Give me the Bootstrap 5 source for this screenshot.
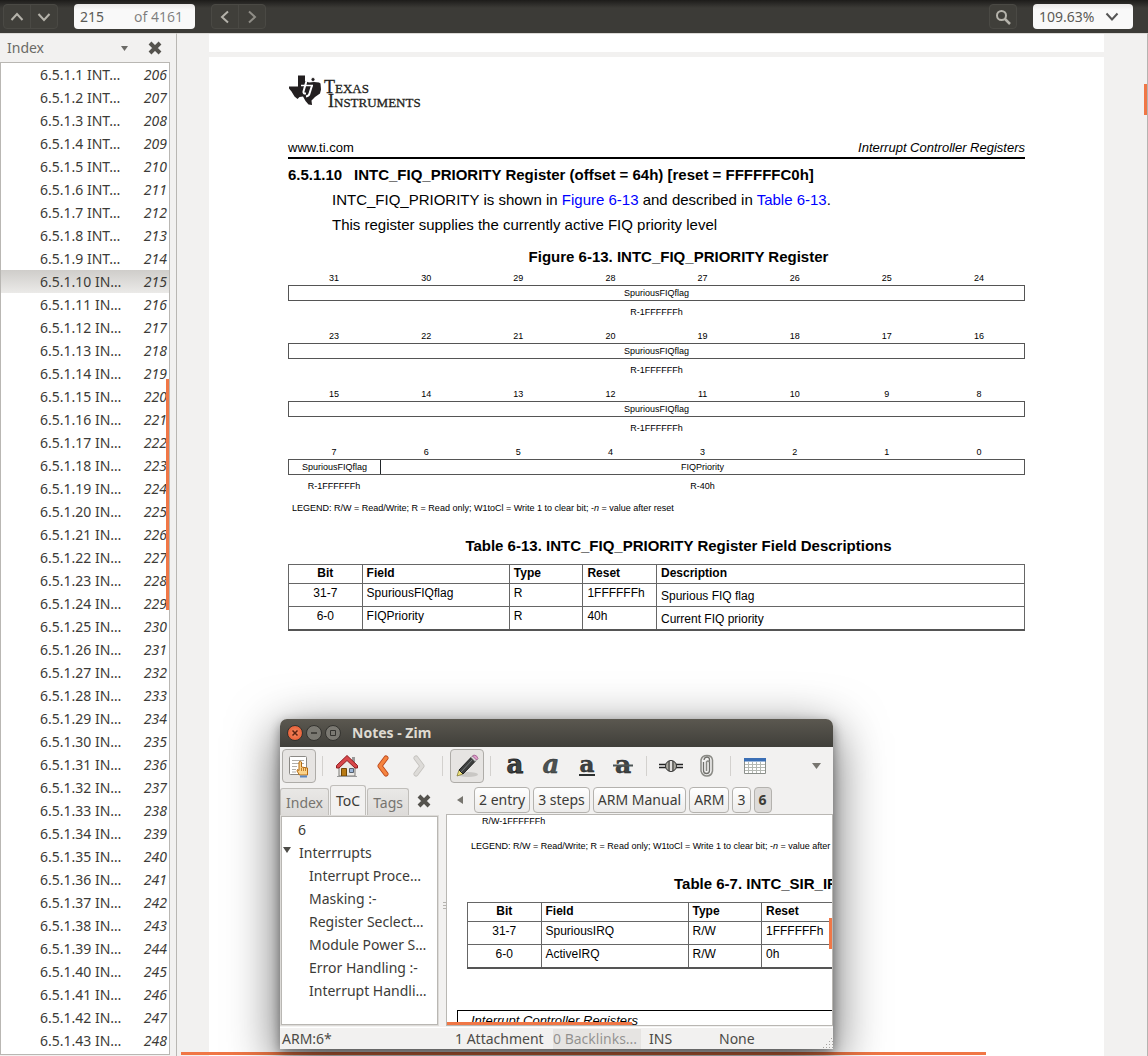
<!DOCTYPE html>
<html lang="en">
<head>
<meta charset="utf-8">
<meta name="viewport" content="width=device-width, initial-scale=1">
<title>INTC_FIQ_PRIORITY Register</title>
<link href="https://cdn.jsdelivr.net/npm/bootstrap@5.3.0/dist/css/bootstrap.min.css" rel="stylesheet">
<style>
:root{--ui:"Noto Sans","Open Sans",sans-serif;--doc:"Liberation Sans",Arial,sans-serif;--panel:#f2f1f0;--line:#b9b7b3;--accent:#f07746}
body{font:14px/20px var(--ui);color:#3c3b37;background:var(--panel)}
svg{display:block;flex:none}
button,input,select{font:inherit;color:inherit}
/* viewer toolbar */
.topbar{height:33px;padding:0 15px 0 3px;background:linear-gradient(#1d1c1a,#3c3b37 8px);color:#b5b3ab}
.darkgrp{border:1px solid #4a4944;border-radius:4px;height:25px;background:#403f3a}
.darkbtn{border:0;background:none;width:26px;padding:0}
.darkbtn+.darkbtn{border-left:1px solid #4a4944;width:27px}
.whitebox{height:25px;border-radius:4px;background:linear-gradient(#e9e8e7,#f9f9f9 6px);color:#5c5b57}
.whitebox input{width:52px;padding:0 0 0 6px;border:0;background:none;outline:0}
.plainsel{appearance:none;border:0;background:none;outline:0;padding:0;cursor:pointer}
.zoomsel{width:100px;padding:0 24px 0 6px}
/* sidebar */
.side{width:177px;border-right:1px solid var(--line);border-top:1px solid #dcdad7}
.sidehead{height:28px;padding:0 14px 0 7px;color:#6b6a66}
.tree{width:170px;border:1px solid var(--line);background:#fff;margin-bottom:1px}
.tree a{height:23px;padding:0 2px 0 39px;color:#3c3b37;text-decoration:none}
.tree a.current{background:linear-gradient(#cfcdca,#ebeae8)}
.thumb{position:absolute;background:var(--accent)}
/* document */
.viewer{border-top:1px solid #dcdad7;border-right:1px solid #b5b3b0}
.sheet{background:#fff;margin:0 43px 0 32px}
.prevpage{height:18px;margin-bottom:5px}
.paper{padding:17px 79px 0 79px;font-family:var(--doc);color:#000}
.brand{height:37px;margin-bottom:27px;color:#231f20}
.brandname{font:18px/14px "Liberation Serif",serif;font-variant:small-caps;padding-top:6px;-webkit-text-stroke:.3px #231f20}
.runhead{font-size:13px;border-bottom:2px solid #000;line-height:19px}
.t15{font-size:15px}
.caption15{line-height:20px;padding-left:44px;text-align:center;font-weight:700}
.paper a{color:#00f;text-decoration:none}
.bitnum{font-size:9px;line-height:12px;text-align:center}
.bitbox{border:1px solid #555;height:16px;line-height:14px;margin:1px 0 5px}
.bitset+.bitset{margin-top:12px}
.w8{width:12.5%}
.legendline{font-size:9px;line-height:12px}
.fields{width:100%;table-layout:fixed;font:12px/16px var(--doc);color:#000;border-bottom:2px solid #555}
.fields th,.fields td{border:1px solid #666;padding:1px 4px;vertical-align:top}
.fields th{height:19px;padding-top:0}.fields td{height:23px}
.fields .low{padding-top:4px}
.fields th:first-child,.fields td:first-child{text-align:center}
/* notes window */
.notes{position:absolute;left:103px;top:685px;width:553px;height:330px;border-radius:7px 7px 0 0;background:var(--panel);box-shadow:0 14px 50px 2px rgba(0,0,0,.58),0 4px 12px rgba(0,0,0,.4)}
.titlebar{height:28px;border-radius:7px 7px 0 0;background:linear-gradient(#5b5850,#403f3a);padding-left:7px;gap:3px;color:#dfdbd2;font-weight:700}
.wbtn{width:16px;height:16px;border-radius:50%;border:1px solid #34332f;background:#7b7972;padding:0}
.wclose{background:radial-gradient(#f58a62,#e4532a)}
.tools{height:37px;padding:1px 12px 1px 2px;gap:2px}
.tbtn{width:34px;height:34px;border:1px solid transparent;border-radius:4px;background:none;padding:0}
.tbtn.pressed{border-color:#aeaca8;background:#e6e4e2}
.vsep{width:1px;height:20px;background:#d3d1ce;margin:0 5px 0 4px}
.leftcol{width:159px}
.tabs{height:31px;gap:1px}
.tabbtn{height:28px;border:1px solid #c0beba;border-bottom:0;border-radius:3px 3px 0 0;background:linear-gradient(#e9e8e6,#dddbd9);color:#76746f;padding:0 5px}
.tabbtn.on{height:31px;background:var(--panel);color:#3c3b37}
.toc{border:1px solid var(--line);outline:1px solid #dddbd8;background:#fff;margin:0 1px 2px 1px;padding:1px 0}
.toc li{height:23px;line-height:23px}
.toc .sub{padding-left:27px}
.crumb{height:26px;border:1px solid #b4b2ae;border-radius:4px;background:linear-gradient(#fff,#ecebea);padding:0 4px}
.crumb.on{background:#dddbd9;font-weight:700}
.note{border:1px solid var(--line);background:#fff;margin-bottom:1px;font-family:var(--doc);color:#000}
.inset{width:736px;margin-left:20px}
.boxhead{border:1px solid #000;width:760px;margin-left:10px;padding-left:13px;font-size:13px;font-style:italic;height:40px}
.status{height:22px;padding-left:2px;color:#4c4b47;border-top:1px solid #fff}
</style>
<script src="https://cdn.jsdelivr.net/npm/bootstrap@5.3.0/dist/js/bootstrap.bundle.min.js"></script>
</head>
<body class="vh-100 d-flex flex-column overflow-hidden">

<header class="topbar d-flex align-items-center flex-shrink-0">
  <div class="darkgrp d-flex">
    <button class="darkbtn d-flex align-items-center justify-content-center" aria-label="Previous page"><svg width="14" height="10" fill="none" stroke="currentColor" stroke-width="2"><path d="M1.500 8 7 2l5.500 6"/></svg></button>
    <button class="darkbtn d-flex align-items-center justify-content-center" aria-label="Next page"><svg width="14" height="10" fill="none" stroke="currentColor" stroke-width="2"><path d="M1.500 2 7 8l5.500-6"/></svg></button>
  </div>
  <div class="whitebox d-flex align-items-center pe-2 ms-3">
    <input id="pg" value="215" aria-label="Page"><label for="pg" class="ps-2 pe-1 text-black-50 text-nowrap">of 4161</label>
  </div>
  <div class="darkgrp d-flex ms-3">
    <button class="darkbtn d-flex align-items-center justify-content-center" aria-label="Back"><svg width="10" height="14" fill="none" stroke="currentColor" stroke-width="2"><path d="M8 1.500 2 7l6 5.500"/></svg></button>
    <button class="darkbtn d-flex align-items-center justify-content-center" aria-label="Forward"><svg width="10" height="14" fill="none" stroke="#8f8d86" stroke-width="2"><path d="M2 1.500 8 7l-6 5.500"/></svg></button>
  </div>
  <div class="darkgrp d-flex ms-auto me-3">
    <button class="darkbtn d-flex align-items-center justify-content-center" aria-label="Find"><svg width="16" height="16" fill="none" stroke="currentColor" stroke-width="2"><circle cx="6.500" cy="6.500" r="4.500"/><path d="m10 10 5 5" stroke-width="2.500"/></svg></button>
  </div>
  <div class="whitebox d-flex align-items-center position-relative">
    <select class="plainsel zoomsel" aria-label="Zoom"><option>109.63%</option></select>
    <svg class="position-absolute end-0 pe-none" style="margin-right:14px" width="14" height="10" fill="none" stroke="#555" stroke-width="2"><path d="M1.500 1.500 7 7.500l5.500-6"/></svg>
  </div>
</header>

<div class="d-flex flex-grow-1 overflow-hidden">
  <aside class="side flex-shrink-0 d-flex flex-column">
    <div class="sidehead d-flex align-items-center flex-shrink-0">
      <select class="plainsel flex-grow-1" aria-label="Side pane"><option>Index</option></select>
      <svg width="7" height="5" fill="#6b6a66" class="me-3"><path d="M0 0h7L3.500 5z"/></svg>
      <button class="border-0 bg-transparent p-0 ms-1" aria-label="Close side pane"><svg width="14" height="14" stroke="#55534e" stroke-width="4"><path d="m2 2 10 10M12 2 2 12"/></svg></button>
    </div>
    <nav class="tree flex-grow-1 overflow-hidden position-relative" id="tree"><span class="thumb" style="right:0;top:316px;width:3px;height:231px"></span></nav>
  </aside>

  <main class="viewer flex-grow-1 position-relative overflow-hidden">
    <div class="sheet prevpage"></div>
    <article class="sheet paper h-100">
      <div class="brand d-flex">
        <svg width="36" height="36" viewBox="0 0 36 36"><path fill="#231f20" d="M10 1.500h7V7l4 1.500 5-.500 5 .5 1.500 1 .5 6-1 4-5 3.500-3.500 3.500.5 4.500-3.500-.500-3-3.500-2.500-4.500-3.500.5-2 2-3-2.500-3-5-2.500-3v-2h9z"/><g stroke="#fff" fill="none"><path d="m18.500 7-3 10.500q-.500 2.500 2.500 2" stroke-width="2"/><path d="M13 11.500h12" stroke-width="1.500"/><path d="m24 11.500-2.500 8q-.500 2.500-3.500 3" stroke-width="2"/></g><circle cx="25" cy="5.500" r="2" fill="#231f20" stroke="#fff" stroke-width=".8"/></svg>
        <div class="brandname"><div>Texas</div><div class="ps-1">Instruments</div></div>
      </div>
      <div class="runhead d-flex justify-content-between"><span>www.ti.com</span><em>Interrupt Controller Registers</em></div>
      <h1 class="t15 fw-bold mb-0 d-flex" style="line-height:20px;margin-top:6px"><span style="width:66px">6.5.1.10</span>INTC_FIQ_PRIORITY Register (offset = 64h) [reset = FFFFFFC0h]</h1>
      <div class="t15" style="padding-left:44px">
        <p class="mb-0" style="margin-top:5px">INTC_FIQ_PRIORITY is shown in <a href="#fig">Figure 6-13</a> and described in <a href="#tab">Table 6-13</a>.</p>
        <p class="mb-0" style="margin-top:5px">This register supplies the currently active FIQ priority level</p>
      </div>
      <h2 id="fig" class="t15 caption15" style="margin:12px 0 5px">Figure 6-13. INTC_FIQ_PRIORITY Register</h2>
      <div id="bits"></div>
      <p class="legendline mb-0 ps-1" style="margin-top:10px">LEGEND: R/W = Read/Write; R = Read only; W1toCl = Write 1 to clear bit; -<em>n</em> = value after reset</p>
      <h2 id="tab" class="t15 caption15" style="margin:22px 0 8px">Table 6-13. INTC_FIQ_PRIORITY Register Field Descriptions</h2>
      <table class="fields">
        <colgroup><col style="width:10%"><col style="width:20%"><col style="width:10%"><col style="width:10%"><col></colgroup>
        <thead><tr><th>Bit</th><th>Field</th><th>Type</th><th>Reset</th><th>Description</th></tr></thead>
        <tbody><tr><td>31-7</td><td>SpuriousFIQflag</td><td>R</td><td>1FFFFFFh</td><td class="low">Spurious FIQ flag</td></tr>
        <tr><td>6-0</td><td>FIQPriority</td><td>R</td><td>40h</td><td class="low">Current FIQ priority</td></tr></tbody>
      </table>
    </article>
    <span class="thumb" style="right:0;top:50px;width:3px;height:31px"></span>
    <span class="thumb" style="left:4px;bottom:1px;width:805px;height:3px"></span>

    <section class="notes d-flex flex-column">
      <div class="titlebar d-flex align-items-center flex-shrink-0">
        <button class="wbtn wclose" aria-label="Close"><svg width="14" height="14" stroke="#5a2412" stroke-width="1.500"><path d="m4.500 4.500 5 5m0-5-5 5"/></svg></button>
        <button class="wbtn" aria-label="Minimize"><svg width="14" height="14" stroke="#34332f" stroke-width="1.500"><path d="M4 7h6"/></svg></button>
        <button class="wbtn" aria-label="Maximize"><svg width="14" height="14" fill="none" stroke="#34332f"><path d="M4.500 4.500h5v5h-5z"/></svg></button>
        <span class="ms-2">Notes - Zim</span>
      </div>
      <div class="tools d-flex align-items-center flex-shrink-0">
        <button class="tbtn pressed d-flex align-items-center justify-content-center" aria-label="Index pane"><svg width="24" height="24"><rect x="2.500" y="2.500" width="17" height="18" rx="1" fill="#fff" stroke="#8b8985"/><path d="M5 6.500h12M5 9.500h12M5 12.500h5M5 15.500h4M5 18h4" stroke="#b0aeaa"/><path d="M12 8q1.500-1.500 2.500 0v5l6 1v7h-8l-2.500-4 .5-1.500 1.500 1z" fill="#fbd38a" stroke="#b56a10"/><path d="M14.500 14v3m2-3v3m2-3v3" stroke="#b56a10" stroke-width=".8"/><path d="M13 22.500h7" stroke="#5b86c0" stroke-width="2"/></svg></button>
        <span class="vsep"></span>
        <button class="tbtn d-flex align-items-center justify-content-center" aria-label="Home"><svg width="24" height="24"><path d="M17 3h3v6h-3z" fill="#999"/><path d="M4 11 12 4l8 7v11H4z" fill="#eceae6" stroke="#7b7974"/><path d="M1.500 11.500 12 1.500l10.500 10v2.500H20l-8-7.500L4 14H1.500z" fill="#d8474a" stroke="#8f1d20"/><path d="M6.500 14.500h5V22h-5z" fill="#b87a14" stroke="#6e4708"/><path d="M14.500 14.500h4v4h-4z" fill="#9bb6d8" stroke="#55606e"/><path d="M2 22.500h20" stroke="#999"/></svg></button>
        <button class="tbtn d-flex align-items-center justify-content-center" aria-label="Back"><svg width="14" height="22" fill="none" stroke-linecap="round" stroke-linejoin="round"><path d="M10 3 4 11l6 8" stroke="#b9451a" stroke-width="5"/><path d="M10 3 4 11l6 8" stroke="#f5843f" stroke-width="3.400"/></svg></button>
        <button class="tbtn d-flex align-items-center justify-content-center" aria-label="Forward"><svg width="14" height="22" fill="none" stroke-linecap="round" stroke-linejoin="round"><path d="m4 3 6 8-6 8" stroke="#c3c1bd" stroke-width="5"/><path d="m4 3 6 8-6 8" stroke="#dddbd8" stroke-width="3.400"/></svg></button>
        <span class="vsep"></span>
        <button class="tbtn pressed d-flex align-items-center justify-content-center" aria-label="Edit"><svg width="26" height="26"><ellipse cx="14" cy="21.500" rx="10" ry="2.500" fill="#c9c7c4"/><path d="m3 23 2-6 4 4z" fill="#f0e27a" stroke="#77702e" stroke-width=".7"/><path d="M5 17 17 4.500l4 4L9 21z" fill="#3d3f3e" stroke="#1c1d1d"/><path d="m7 19 11-12" stroke="#74787a"/><path d="m17 4.500 2-2 4 4-2 2z" fill="#ddd" stroke="#777" stroke-width=".7"/><path d="m18.500 3 1.500-1q3 0 4 3.500L22.500 7z" fill="#e09ccc" stroke="#93507f" stroke-width=".7"/></svg></button>
        <span class="vsep"></span>
        <button class="tbtn" aria-label="Bold"><svg width="32" height="32" font-family="DejaVu Serif" font-weight="700" font-size="26"><text x="16" y="23" text-anchor="middle" fill="#3f4444" stroke="#1f2222" stroke-width=".8">a</text></svg></button>
        <button class="tbtn" aria-label="Italic"><svg width="32" height="32" font-family="DejaVu Serif" font-weight="700" font-style="italic" font-size="26"><text x="16" y="23" text-anchor="middle" fill="#4c5252" stroke="#232626" stroke-width=".4">a</text></svg></button>
        <button class="tbtn" aria-label="Underline"><svg width="32" height="32" font-family="DejaVu Serif" font-weight="700" font-size="23"><text x="16" y="22" text-anchor="middle" fill="#3f4444" stroke="#1f2222" stroke-width=".5">a</text><path d="M8 25h16" stroke="#2c3030" stroke-width="2"/></svg></button>
        <button class="tbtn" aria-label="Strike"><svg width="32" height="32" font-family="DejaVu Serif" font-weight="700" font-size="25"><text x="16" y="23" text-anchor="middle" fill="#3f4444" stroke="#1f2222" stroke-width=".5">a</text><path d="M6 15.500h20" stroke="#4d5555" stroke-width="2"/></svg></button>
        <span class="vsep"></span>
        <button class="tbtn d-flex align-items-center justify-content-center" aria-label="Link"><svg width="26" height="16"><path d="M1 6.500h7m-7 3h7m10-3h7m-7 3h7" stroke="#222" stroke-width="1.500"/><ellipse cx="13" cy="8" rx="5.500" ry="5.500" fill="#aaa8a0" stroke="#333"/><path d="M11 3v10M15 3v10" stroke="#333" stroke-width="1"/><path d="M13 3v10" stroke="#f2f1f0" stroke-width="1.500"/></svg></button>
        <button class="tbtn d-flex align-items-center justify-content-center" aria-label="Attach"><svg width="16" height="24" fill="none"><path d="M4.500 8v8.500a3 3 0 0 0 6 0V6q0-3-2.500-3T5 6" stroke="#6f6f6b" stroke-width="1.300"/><path d="M7.500 17V8q1.500-2 3 0M2 16V6q1-4.500 6-4.500T13.500 6v11q-1 5-5.500 5t-6-5V10" stroke="#8a8a85" stroke-width="1.500"/></svg></button>
        <span class="vsep"></span>
        <button class="tbtn d-flex align-items-center justify-content-center" aria-label="Table"><svg width="24" height="18"><path d="M1.500 1.500h21v15h-21z" fill="#fff" stroke="#8b8f8a"/><path d="M1 1h22v3.500H1z" fill="#3b6fb5"/><path d="M5.500 5v11m4-11v11m4-11v11m4-11v11M2 7.500h20M2 10.500h20M2 13.500h20" stroke="#b4b8b2"/></svg></button>
        <button class="border-0 bg-transparent p-0 ms-auto" aria-label="More"><svg width="9" height="6" fill="#77756f"><path d="M0 0h9L4.500 6z"/></svg></button>
      </div>

      <div class="d-flex flex-grow-1 overflow-hidden" style="min-height:0;padding-top:1px">
        <div class="leftcol d-flex flex-column flex-shrink-0 ps-0">
          <div class="tabs d-flex align-items-end flex-shrink-0">
            <button class="tabbtn">Index</button><button class="tabbtn on">ToC</button><button class="tabbtn">Tags</button>
            <button class="border-0 bg-transparent align-self-center ms-auto pe-2 ps-0" aria-label="Close pane"><svg width="14" height="14" stroke="#55534e" stroke-width="4"><path d="m2 2 10 10M12 2 2 12"/></svg></button>
          </div>
          <ul class="toc list-unstyled flex-grow-1 overflow-hidden">
            <li style="padding-left:16px">6</li>
            <li class="d-flex"><svg width="9" height="18" fill="#4c4b47" class="me-2"><path d="M1 6h8L5 12z"/></svg><span>Interrrupts</span></li>
            <li class="sub">Interrupt Proce…</li><li class="sub">Masking :-</li><li class="sub">Register Seclect…</li><li class="sub">Module Power S…</li><li class="sub">Error Handling :-</li><li class="sub">Interrupt Handli…</li>
          </ul>
        </div>
        <div class="d-flex align-items-center flex-shrink-0 ps-1" style="width:7px"><svg width="3" height="8" stroke="#b5b3af"><path d="M0 .5h3M0 3.500h3M0 6.500h3"/></svg></div>
        <div class="flex-grow-1 d-flex flex-column overflow-hidden">
          <div class="d-flex align-items-center flex-shrink-0" style="height:29px;gap:3px;padding-left:11px">
            <svg width="6" height="8" fill="#77756f" class="me-2"><path d="M6 0v8L0 4z"/></svg>
            <button class="crumb">2 entry</button><button class="crumb">3 steps</button><button class="crumb">ARM Manual</button><button class="crumb">ARM</button><button class="crumb">3</button><button class="crumb on">6</button>
          </div>
          <div class="note flex-grow-1 overflow-hidden position-relative" style="min-height:0">
            <div class="inset">
              <div class="legendline" style="padding-left:15px">R/W-1FFFFFFh</div>
              <div class="legendline ps-1" style="margin-top:13px">LEGEND: R/W = Read/Write; R = Read only; W1toCl = Write 1 to clear bit; -<em>n</em> = value after reset</div>
              <h3 class="t15 fw-bold" style="line-height:20px;margin:22px 0 8px;padding-left:207px">Table 6-7. INTC_SIR_IRQ Field Descriptions</h3>
              <table class="fields">
                <colgroup><col style="width:10%"><col style="width:20%"><col style="width:10%"><col style="width:10%"><col></colgroup>
                <thead><tr><th>Bit</th><th>Field</th><th>Type</th><th>Reset</th><th></th></tr></thead>
                <tbody><tr><td>31-7</td><td>SpuriousIRQ</td><td>R/W</td><td>1FFFFFFh</td><td></td></tr>
                <tr><td>6-0</td><td>ActiveIRQ</td><td>R/W</td><td>0h</td><td></td></tr></tbody>
              </table>
            </div>
            <div class="boxhead" style="margin-top:41px">Interrupt Controller Registers</div>
            <span class="thumb" style="right:0;top:103px;width:3px;height:31px"></span>
            <span class="thumb" style="left:0;bottom:0;width:185px;height:3px"></span>
          </div>
        </div>
      </div>

      <footer class="status d-flex align-items-center flex-shrink-0 position-relative">
        <span style="width:173px">ARM:6*</span><span style="width:98px">1 Attachment</span>
        <span class="text-black-50" style="width:88px;background:#e6e4e2"><span class="opacity-75">0 Backlinks...</span></span>
        <span class="ms-2" style="width:70px">INS</span><span>None</span>
        <svg class="position-absolute end-0 bottom-0" width="12" height="12" fill="#a5a39f"><path d="M10 1h1v1h-1zM8 4h1v1H8zm3 0h1v1h-1zM5 7h1v1H5zm3 0h1v1H8zm3 0h1v1h-1zM2 10h1v1H2zm3 0h1v1H5zm3 0h1v1H8zm3 0h1v1h-1z"/></svg>
      </footer>
    </section>
  </main>
</div>

<script>
// index entries of the current chapter
const tree=document.getElementById('tree');
for(let n=1;n<=43;n++){
  const a=document.createElement('a');
  a.href='#p'+(205+n);
  a.className='d-flex align-items-center justify-content-between'+(n===10?' current':'');
  a.innerHTML=`<span>6.5.1.${n} ${n<10?'INT…':'IN…'}</span><em>${205+n}</em>`;
  tree.append(a);
}
// register layout, one byte per row
const bits=document.getElementById('bits');
[31,23,15,7].forEach(top=>{
  const nums=Array.from({length:8},(_,i)=>`<span class="w8">${top-i}</span>`).join('');
  const last=top===7;
  const box=last?'<span class="w8 border-end border-dark">SpuriousFIQflag</span><span class="flex-grow-1">FIQPriority</span>':'<span class="w-100">SpuriousFIQflag</span>';
  const res=last?'<span class="w8">R-1FFFFFFh</span><span class="flex-grow-1">R-40h</span>':'<span class="w-100">R-1FFFFFFh</span>';
  bits.insertAdjacentHTML('beforeend',`<div class="bitset bitnum"><div class="d-flex">${nums}</div><div class="bitbox d-flex">${box}</div><div class="d-flex">${res}</div></div>`);
});
</script>
</body>
</html>
